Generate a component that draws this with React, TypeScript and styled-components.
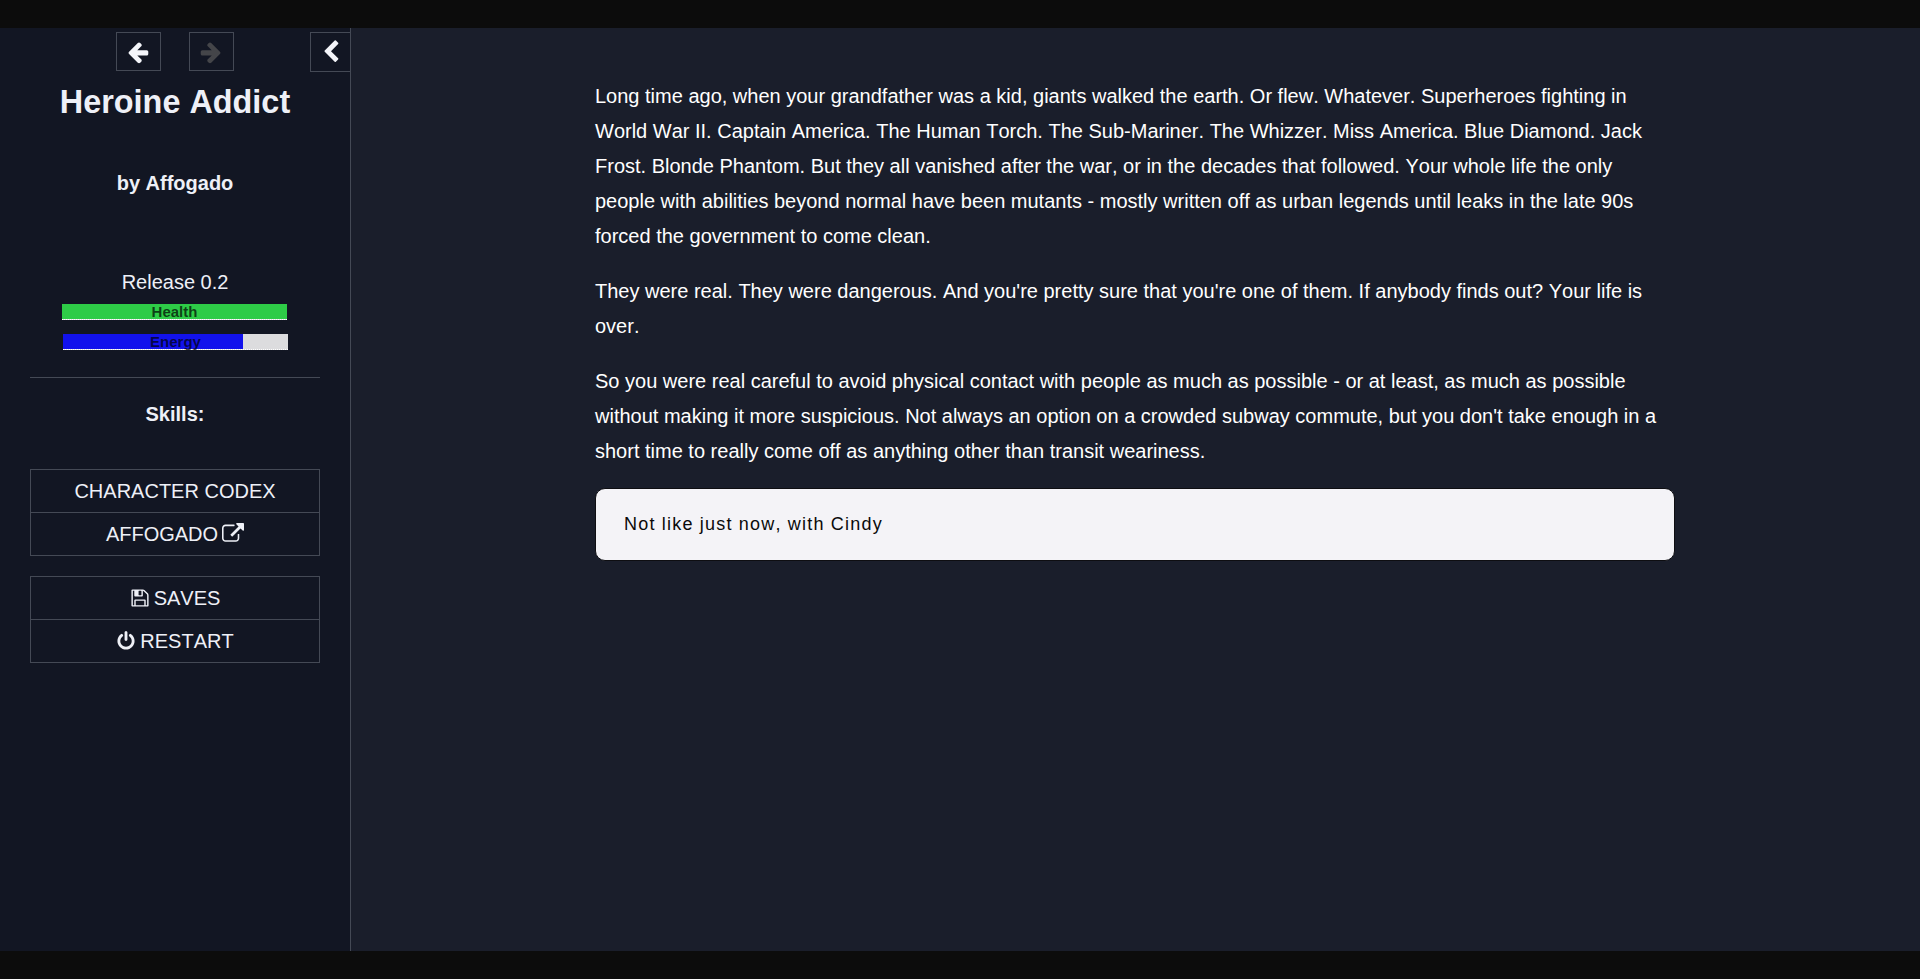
import styled, { createGlobalStyle } from 'styled-components';

const GlobalStyle = createGlobalStyle`
  html, body {
    margin: 0;
    padding: 0;
    height: 100%;
    background: #0c0c0c;
  }
  body {
    font-family: "Liberation Sans", Arial, sans-serif;
    font-kerning: none;
    overflow: hidden;
  }
`;

// font-awesome 4 shapes, the react-icons set only has the thinner v5 ones
const ICONS = {
  arrowLeft:
    'M1664 896v128q0 53-32.5 90.5t-84.5 37.5h-704l293 294q38 36 38 90t-38 90l-75 76q-37 37-90 37-52 0-91-37l-651-652q-37-37-37-90 0-52 37-91l651-650q38-38 91-38 52 0 90 38l75 74q38 38 38 91t-38 91l-293 293h704q52 0 84.5 37.5t32.5 90.5z',
  arrowRight:
    'M1600 960q0 54-37 91l-651 651q-39 37-91 37-51 0-90-37l-75-75q-38-38-38-91t38-91l293-293h-704q-52 0-84.5-37.5t-32.5-90.5v-128q0-53 32.5-90.5t84.5-37.5h704l-293-294q-38-36-38-90t38-90l75-75q38-38 90-38 53 0 91 38l651 651q37 35 37 90z',
  chevronLeft:
    'M1427 301l-531 531 531 531q19 19 19 45t-19 45l-166 166q-19 19-45 19t-45-19l-742-742q-19-19-19-45t19-45l742-742q19-19 45-19t45 19l166 166q19 19 19 45t-19 45z',
  externalLink:
    'M1408 928v320q0 119-84.5 203.5t-203.5 84.5h-832q-119 0-203.5-84.5t-84.5-203.5v-832q0-119 84.5-203.5t203.5-84.5h704q14 0 23 9t9 23v64q0 14-9 23t-23 9h-704q-66 0-113 47t-47 113v832q0 66 47 113t113 47h832q66 0 113-47t47-113v-320q0-14 9-23t23-9h64q14 0 23 9t9 23zm384-864v512q0 26-19 45t-45 19-45-19l-176-176-652 652q-10 10-23 10t-23-10l-114-114q-10-10-10-23t10-23l652-652-176-176q-19-19-19-45t19-45 45-19h512q26 0 45 19t19 45z',
  floppy:
    'M512 1536h768v-384h-768v384zm896 0h128v-896q0-14-10-38.5t-20-34.5l-281-281q-10-10-34-20t-39-10v416q0 40-28 68t-68 28h-576q-40 0-68-28t-28-68v-416h-128v1280h128v-416q0-40 28-68t68-28h832q40 0 68 28t28 68v416zm-384-928v-320q0-13-9.5-22.5t-22.5-9.5h-192q-13 0-22.5 9.5t-9.5 22.5v320q0 13 9.5 22.5t22.5 9.5h192q13 0 22.5-9.5t9.5-22.5zm640 32v928q0 40-28 68t-68 28h-1344q-40 0-68-28t-28-68v-1344q0-40 28-68t68-28h928q40 0 88 20t76 48l280 280q28 28 48 76t20 88z',
  power:
    'M1664 896q0 156-61 298t-164 245-245 164-298 61-298-61-245-164-164-245-61-298q0-182 80.5-343t226.5-270q43-32 95.5-25t83.5 50q32 42 24.5 94.5t-49.5 84.5q-98 74-151.5 181t-53.5 228q0 104 40.5 198.5t109.5 163.5 163.5 109.5 198.5 40.5 198.5-40.5 163.5-109.5 109.5-163.5 40.5-198.5q0-121-53.5-228t-151.5-181q-42-32-49.5-84.5t24.5-94.5q31-43 84-50t95 25q146 109 226.5 270t80.5 343zm-640-768v640q0 52-38 90t-90 38-90-38-38-90v-640q0-52 38-90t90-38 90 38 38 90z',
};

const IconSvg = styled.svg<{ $size: number }>`
  width: ${(p) => p.$size}px;
  height: ${(p) => p.$size}px;
  fill: currentColor;
  flex: none;
`;

const Icon = ({ name, size }: { name: keyof typeof ICONS; size: number }) => (
  <IconSvg $size={size} viewBox="0 0 1792 1792">
    <path d={ICONS[name]} />
  </IconSvg>
);

const Page = styled.div`
  height: 979px;
  padding: 28px 0;
  box-sizing: border-box;
  display: flex;
  background: #0c0c0c;
`;
const Sidebar = styled.aside`
  position: relative;
  width: 351px;
  flex: none;
  box-sizing: border-box;
  padding: 4px 30px 0 30px;
  background: #121623;
  border-right: 1px solid #444955;
  color: #eef0f7;
  text-align: center;
`;
const HistoryNav = styled.div`
  display: flex;
  justify-content: center;
  gap: 28px;
  margin-left: -1px;
`;
const NavButton = styled.div<{ $disabled?: boolean }>`
  width: 45px;
  height: 39px;
  box-sizing: border-box;
  display: flex;
  align-items: center;
  justify-content: center;
  border: 1px solid #444955;
  color: ${(p) => (p.$disabled ? '#444549' : '#f4f5fa')};
`;
const CollapseButton = styled.div`
  position: absolute;
  top: 4px;
  right: 0;
  width: 40px;
  height: 40px;
  box-sizing: border-box;
  display: flex;
  align-items: center;
  justify-content: center;
  border: 1px solid #444955;
  border-right: none;
  color: #f4f5fa;
`;
const Title = styled.h1`
  margin: 12px 0 0;
  font-size: 32.4px;
  line-height: 38px;
  font-weight: 700;
`;
const Author = styled.h2`
  margin: 50px 0 0;
  font-size: 20px;
  line-height: 24px;
  font-weight: 700;
`;
const Release = styled.div`
  margin-top: 75px;
  font-size: 20px;
  line-height: 24px;
`;
const Meter = styled.div<{ $top: number; $shift: number }>`
  position: relative;
  width: 225px;
  height: 15px;
  margin: ${(p) => p.$top}px 0 0 ${(p) => p.$shift}px;
  background: #dcdcde;
  border-bottom: 1px dotted #fff;
  text-align: center;
  font-size: 15px;
  line-height: 15px;
  font-weight: 700;
  color: rgba(0, 0, 0, 0.7);
`;
const MeterFill = styled.div<{ $color: string }>`
  position: absolute;
  top: 0;
  bottom: 0;
  left: 0;
  background: ${(p) => p.$color};
`;
const MeterLabel = styled.span`
  position: relative;
`;
const Divider = styled.hr`
  margin: 27px 0 0;
  border: none;
  border-top: 1px solid #444955;
`;
const Skills = styled.h3`
  margin: 24px 0 0;
  font-size: 20px;
  line-height: 24px;
  font-weight: 700;
`;
const LinkList = styled.ul<{ $top: number }>`
  list-style: none;
  margin: ${(p) => p.$top}px 0 0;
  padding: 0;
  border: 1px solid #444955;
`;
const LinkItem = styled.li`
  height: 42px;
  box-sizing: border-box;
  display: flex;
  align-items: center;
  justify-content: center;
  gap: 4px;
  font-size: 20px;
  & + & {
    height: 43px;
    border-top: 1px solid #444955;
  }
`;
const Main = styled.main`
  flex: 1;
  background: #1a1e2b;
  padding: 51px 0 0 244px;
  color: #fff;
`;
const Story = styled.div`
  width: 1080px;
  font-size: 20px;
  line-height: 35px;
`;
const Paragraph = styled.p`
  margin: 0 0 20px;
`;
const Choice = styled.div`
  width: 1080px;
  height: 73px;
  margin-top: -1px;
  box-sizing: border-box;
  padding-left: 28px;
  display: flex;
  align-items: center;
  background: #f4f3f7;
  border: 1px solid #0e0e12;
  border-radius: 10px;
  color: #0a0a0a;
  font-size: 18px;
  letter-spacing: 1.2px;
`;

export default function App() {
  return (
    <Page>
      <GlobalStyle />
      <Sidebar>
        <HistoryNav>
          <NavButton>
            <Icon name="arrowLeft" size={24} />
          </NavButton>
          <NavButton $disabled>
            <Icon name="arrowRight" size={24} />
          </NavButton>
        </HistoryNav>
        <CollapseButton>
          <Icon name="chevronLeft" size={24} />
        </CollapseButton>
        <Title>Heroine Addict</Title>
        <Author>by Affogado</Author>
        <Release>Release 0.2</Release>
        <Meter $top={10} $shift={32}>
          <MeterFill $color="#2ecc47" style={{ width: '100%' }} />
          <MeterLabel>Health</MeterLabel>
        </Meter>
        <Meter $top={14} $shift={33}>
          <MeterFill $color="#1212ec" style={{ width: '80%' }} />
          <MeterLabel>Energy</MeterLabel>
        </Meter>
        <Divider />
        <Skills>Skills:</Skills>
        <LinkList $top={43}>
          <LinkItem>CHARACTER CODEX</LinkItem>
          <LinkItem>
            AFFOGADO <Icon name="externalLink" size={22} />
          </LinkItem>
        </LinkList>
        <LinkList $top={20}>
          <LinkItem>
            <Icon name="floppy" size={20} /> SAVES
          </LinkItem>
          <LinkItem>
            <Icon name="power" size={20} /> RESTART
          </LinkItem>
        </LinkList>
      </Sidebar>
      <Main>
        <Story>
          <Paragraph>
            Long time ago, when your grandfather was a kid, giants walked the earth. Or flew. Whatever. Superheroes
            fighting in World War II. Captain America. The Human Torch. The Sub-Mariner. The Whizzer. Miss America. Blue
            Diamond. Jack Frost. Blonde Phantom. But they all vanished after the war, or in the decades that followed.
            Your whole life the only people with abilities beyond normal have been mutants - mostly written off as urban
            legends until leaks in the late 90s forced the government to come clean.
          </Paragraph>
          <Paragraph>
            They were real. They were dangerous. And you're pretty sure that you're one of them. If anybody finds out?
            Your life is over.
          </Paragraph>
          <Paragraph>
            So you were real careful to avoid physical contact with people as much as possible - or at least, as much as
            possible without making it more suspicious. Not always an option on a crowded subway commute, but you don't
            take enough in a short time to really come off as anything other than transit weariness.
          </Paragraph>
        </Story>
        <Choice>Not like just now, with Cindy</Choice>
      </Main>
    </Page>
  );
}
